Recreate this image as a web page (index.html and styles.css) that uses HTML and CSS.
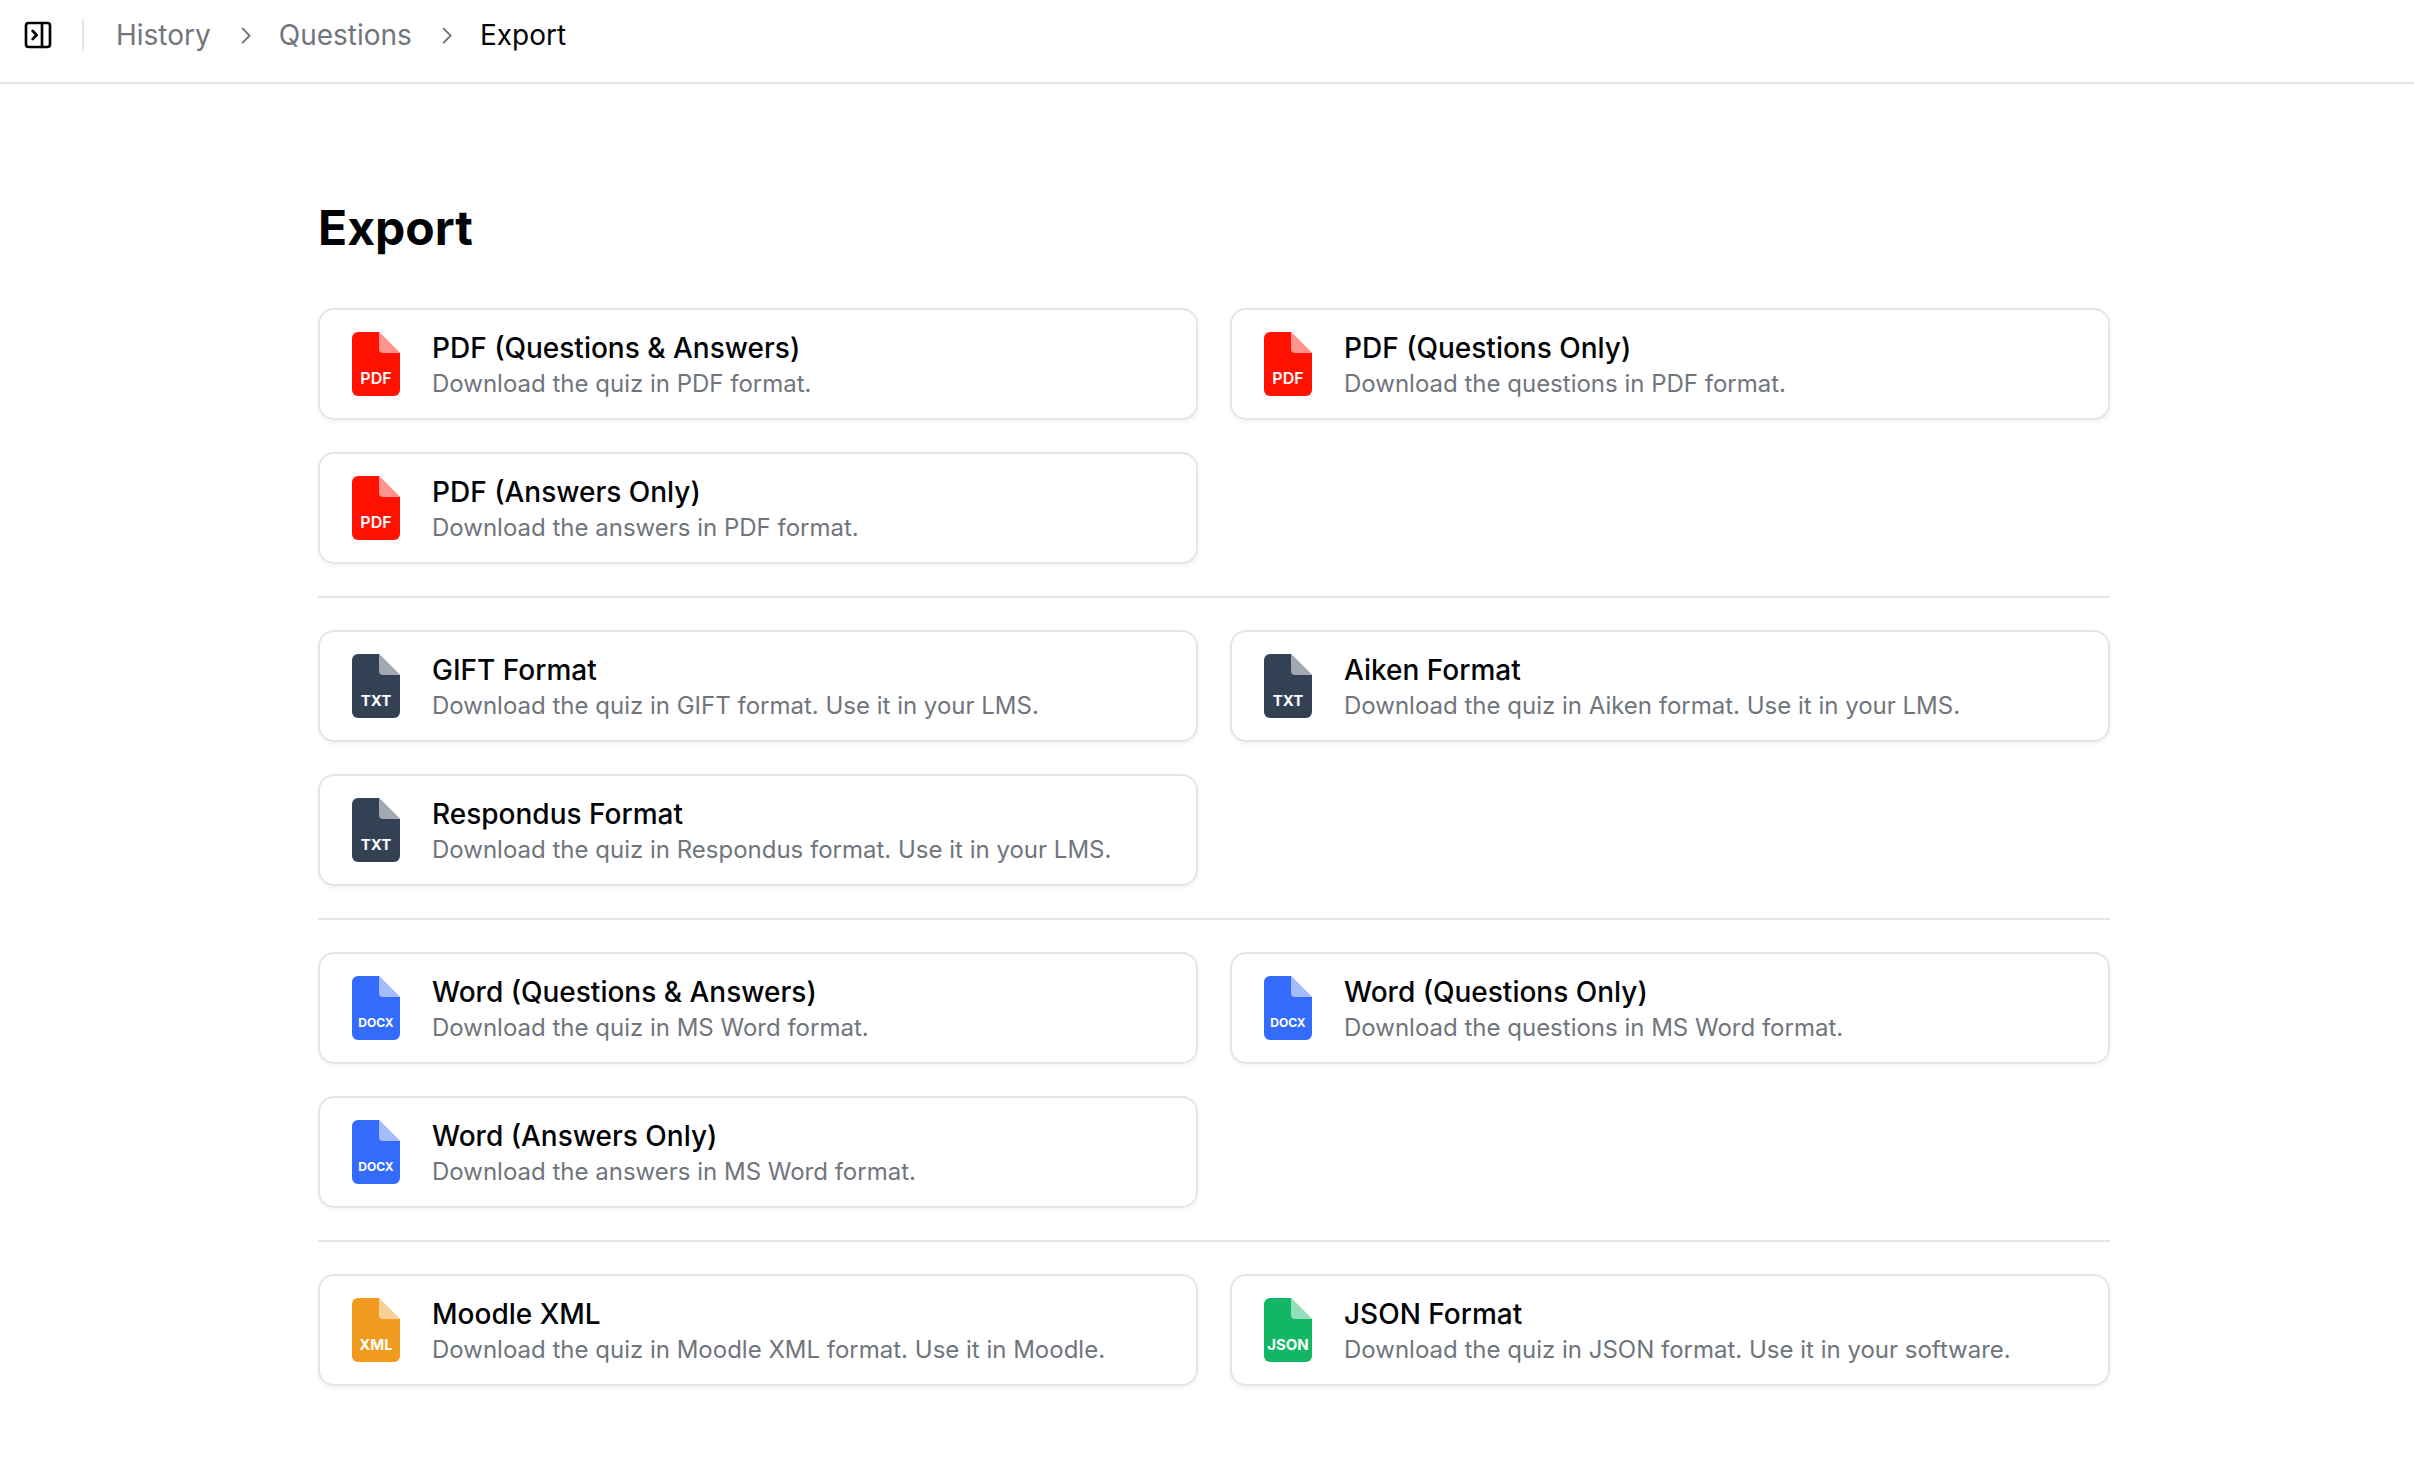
FILE: index.html
```
<!DOCTYPE html>
<html lang="en">
<head>
<meta charset="utf-8">
<meta name="viewport" content="width=device-width, initial-scale=1">
<title>Export</title>
<link rel="stylesheet" href="styles.css">
</head>
<body>
<svg class="defs" aria-hidden="true">
  <symbol id="sheet" viewBox="0 0 48 64">
    <path fill="currentColor" d="M6 0H27L48 21V58a6 6 0 0 1-6 6H6a6 6 0 0 1-6-6V6a6 6 0 0 1 6-6Z"/>
    <path fill="#fff" fill-opacity=".55" d="M27 0L48 21H31a4 4 0 0 1-4-4Z"/>
  </symbol>
  <symbol id="chevron" viewBox="0 0 24 24">
    <path fill="none" stroke="currentColor" stroke-width="1.7" stroke-linecap="round" stroke-linejoin="round" d="m10 18.5 6-6-6-6"/>
  </symbol>
</svg>
<header class="topbar">
  <button class="toggle" type="button" aria-label="Toggle sidebar">
    <svg viewBox="0 0 24 24" fill="none" stroke="currentColor" stroke-width="2" stroke-linecap="round" stroke-linejoin="round"><rect x="3" y="3" width="18" height="18" rx="2"/><path d="M15 3v18M8 9l3 3-3 3"/></svg>
  </button>
  <span class="divider"></span>
  <nav aria-label="Breadcrumb">
    <ol class="crumbs">
      <li><a href="#history">History</a></li>
      <li class="chevron" aria-hidden="true"><svg><use href="#chevron"/></svg></li>
      <li><a href="#questions">Questions</a></li>
      <li class="chevron" aria-hidden="true"><svg><use href="#chevron"/></svg></li>
      <li class="current" aria-current="page">Export</li>
    </ol>
  </nav>
</header>
<main class="page">
  <div class="content">
    <h1>Export</h1>
    <section class="group">
      <a class="card" href="#pdf"><svg class="file pdf" viewBox="0 0 48 64"><use href="#sheet"/><text x="24" y="52">PDF</text></svg><span class="text"><span class="name">PDF (Questions &amp; Answers)</span><span class="desc">Download the quiz in PDF format.</span></span></a>
      <a class="card" href="#pdf-questions"><svg class="file pdf" viewBox="0 0 48 64"><use href="#sheet"/><text x="24" y="52">PDF</text></svg><span class="text"><span class="name">PDF (Questions Only)</span><span class="desc">Download the questions in PDF format.</span></span></a>
      <a class="card" href="#pdf-answers"><svg class="file pdf" viewBox="0 0 48 64"><use href="#sheet"/><text x="24" y="52">PDF</text></svg><span class="text"><span class="name">PDF (Answers Only)</span><span class="desc">Download the answers in PDF format.</span></span></a>
    </section>
    <hr>
    <section class="group">
      <a class="card" href="#gift"><svg class="file txt" viewBox="0 0 48 64"><use href="#sheet"/><text x="24" y="52">TXT</text></svg><span class="text"><span class="name">GIFT Format</span><span class="desc">Download the quiz in GIFT format. Use it in your LMS.</span></span></a>
      <a class="card" href="#aiken"><svg class="file txt" viewBox="0 0 48 64"><use href="#sheet"/><text x="24" y="52">TXT</text></svg><span class="text"><span class="name">Aiken Format</span><span class="desc">Download the quiz in Aiken format. Use it in your LMS.</span></span></a>
      <a class="card" href="#respondus"><svg class="file txt" viewBox="0 0 48 64"><use href="#sheet"/><text x="24" y="52">TXT</text></svg><span class="text"><span class="name">Respondus Format</span><span class="desc">Download the quiz in Respondus format. Use it in your LMS.</span></span></a>
    </section>
    <hr>
    <section class="group">
      <a class="card" href="#word"><svg class="file docx" viewBox="0 0 48 64"><use href="#sheet"/><text x="24" y="51">DOCX</text></svg><span class="text"><span class="name">Word (Questions &amp; Answers)</span><span class="desc">Download the quiz in MS Word format.</span></span></a>
      <a class="card" href="#word-questions"><svg class="file docx" viewBox="0 0 48 64"><use href="#sheet"/><text x="24" y="51">DOCX</text></svg><span class="text"><span class="name">Word (Questions Only)</span><span class="desc">Download the questions in MS Word format.</span></span></a>
      <a class="card" href="#word-answers"><svg class="file docx" viewBox="0 0 48 64"><use href="#sheet"/><text x="24" y="51">DOCX</text></svg><span class="text"><span class="name">Word (Answers Only)</span><span class="desc">Download the answers in MS Word format.</span></span></a>
    </section>
    <hr>
    <section class="group">
      <a class="card" href="#moodle"><svg class="file xml" viewBox="0 0 48 64"><use href="#sheet"/><text x="24" y="52">XML</text></svg><span class="text"><span class="name">Moodle XML</span><span class="desc">Download the quiz in Moodle XML format. Use it in Moodle.</span></span></a>
      <a class="card" href="#json"><svg class="file json" viewBox="0 0 48 64"><use href="#sheet"/><text x="24" y="52">JSON</text></svg><span class="text"><span class="name">JSON Format</span><span class="desc">Download the quiz in JSON format. Use it in your software.</span></span></a>
    </section>
  </div>
</main>
</body>
</html>
```
FILE: styles.css
```
* { box-sizing: border-box; }
body {
  margin: 0;
  background: #fff;
  color: #020408;
  font-family: Inter, "Liberation Sans", sans-serif;
}
a { color: inherit; text-decoration: none; }
svg { display: block; }
.defs { position: absolute; width: 0; height: 0; }

.topbar {
  display: flex;
  align-items: center;
  padding: 16px 22px 28px;
  border-bottom: 2px solid #e5e5e7;
}
.toggle {
  width: 32px;
  height: 32px;
  padding: 0;
  border: 0;
  background: none;
  color: inherit;
}
.toggle svg { width: 32px; height: 32px; }
.divider {
  width: 2px;
  height: 32px;
  margin: 0 32px 0 28px;
  background: #e5e5e7;
}
.crumbs {
  display: flex;
  align-items: center;
  gap: 20px;
  margin: 0;
  padding: 0;
  list-style: none;
  color: #70757d;
  font-size: 28px;
  line-height: 38px;
}
.chevron svg { width: 28px; height: 28px; }
.current { color: #020408; }

.page { padding: 112px 0 88px 14px; }
.content {
  display: flex;
  flex-direction: column;
  gap: 32px;
  max-width: 1792px;
  margin: 0 auto;
}
h1 {
  margin: 0 0 16px;
  font-size: 48px;
  font-weight: 700;
  line-height: 64px;
}
hr {
  width: 100%;
  height: 2px;
  margin: 0;
  border: 0;
  background: #e5e5e7;
}
.group {
  display: grid;
  grid-template-columns: 1fr 1fr;
  gap: 32px;
}
.card {
  display: flex;
  align-items: center;
  gap: 32px;
  padding: 18px 32px;
  border: 2px solid #e5e5e7;
  border-radius: 16px;
  box-shadow: 0 2px 4px rgba(0, 0, 0, 0.05);
}
.text { display: flex; flex-direction: column; }
.name { font-size: 28px; font-weight: 500; line-height: 40px; }
.desc { color: #70757d; font-size: 24px; line-height: 32px; }

.file { flex: none; width: 48px; height: 64px; }
.file text {
  fill: #fff;
  font-size: 15px;
  font-weight: 700;
  text-anchor: middle;
}
.pdf { color: #ff1200; }
.pdf text { font-size: 16px; font-weight: 600; }
.txt { color: #344054; }
.docx { color: #346bfb; }
.docx text { font-size: 12px; }
.xml { color: #f09a1e; }
.json { color: #12b765; }
```
